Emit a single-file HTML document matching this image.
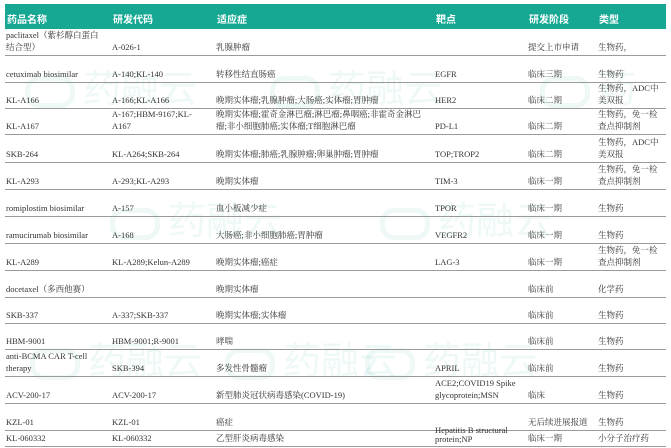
<!DOCTYPE html><html><head><meta charset="utf-8"><style>
body{margin:0;width:671px;height:448px;background:#fff;position:relative;overflow:hidden;font-family:"Liberation Serif","Noto Serif CJK SC",serif;color:#333;font-size:8.5px}
.hd{position:absolute;left:5px;top:4px;width:661px;height:25px;background:#17a894;color:#fff;font-family:"Liberation Sans","Noto Sans CJK SC",sans-serif;font-weight:bold;font-size:10px}
.hd span{position:absolute;top:7px}
.r{position:absolute;left:5px;width:661px;border-bottom:1.5px solid #9a9a9a}
.r div{position:absolute;bottom:2px;line-height:12px}
.c0{left:1px;width:98px}.c1{left:107px;width:96px}.c2{left:211px;width:206px}.c3{left:430px;width:92px}.c4{left:523px}.c5{left:593px;width:66px}
.wm{position:absolute;color:rgba(23,168,148,0.08);font-family:"Noto Sans CJK SC",sans-serif;font-size:38px;white-space:nowrap}
.wm i{display:inline-block;width:40px;height:22px;border:5px solid rgba(23,168,148,0.08);border-radius:14px;margin-right:8px;vertical-align:middle}
</style></head><body>
<div class="hd"><span style="left:2px">药品名称</span><span style="left:108px">研发代码</span><span style="left:212px">适应症</span><span style="left:431px">靶点</span><span style="left:524px">研发阶段</span><span style="left:594px">类型</span></div>
<div class="wm" style="left:25px;top:58px"><i></i>药融云</div>
<div class="wm" style="left:270px;top:58px"><i></i>药融云</div>
<div class="wm" style="left:540px;top:58px"><i></i>药</div>
<div class="wm" style="left:110px;top:190px"><i></i>药融云</div>
<div class="wm" style="left:380px;top:190px"><i></i>药融云</div>
<div class="wm" style="left:30px;top:330px"><i></i>药融云</div>
<div class="wm" style="left:225px;top:330px"><i></i>药融云</div>
<div class="wm" style="left:365px;top:330px"><i></i>药融云</div>
<div class="r" style="top:29px;height:26px"><div class="c0">paclitaxel（紫杉醇白蛋白结合型）</div><div class="c1">A-026-1</div><div class="c2">乳腺肿瘤</div><div class="c4">提交上市申请</div><div class="c5">生物药，</div></div>
<div class="r" style="top:56px;height:26px"><div class="c0">cetuximab biosimilar</div><div class="c1">A-140;KL-140</div><div class="c2">转移性结直肠癌</div><div class="c3">EGFR</div><div class="c4">临床三期</div><div class="c5">生物药</div></div>
<div class="r" style="top:83px;height:25px"><div class="c0">KL-A166</div><div class="c1">A-166;KL-A166</div><div class="c2">晚期实体瘤;乳腺肿瘤;大肠癌;实体瘤;胃肿瘤</div><div class="c3">HER2</div><div class="c4">临床二期</div><div class="c5">生物药，ADC中<br>美双报</div></div>
<div class="r" style="top:109px;height:25px"><div class="c0">KL-A167</div><div class="c1">A-167;HBM-9167;KL-A167</div><div class="c2">晚期实体瘤;霍奇金淋巴瘤;淋巴瘤;鼻咽癌;非霍奇金淋巴瘤;非小细胞肺癌;实体瘤;T细胞淋巴瘤</div><div class="c3">PD-L1</div><div class="c4">临床二期</div><div class="c5">生物药，免一检<br>查点抑制剂</div></div>
<div class="r" style="top:135px;height:27px"><div class="c0">SKB-264</div><div class="c1">KL-A264;SKB-264</div><div class="c2">晚期实体瘤;肺癌;乳腺肿瘤;卵巢肿瘤;胃肿瘤</div><div class="c3">TOP;TROP2</div><div class="c4">临床二期</div><div class="c5">生物药，ADC中<br>美双报</div></div>
<div class="r" style="top:163px;height:26px"><div class="c0">KL-A293</div><div class="c1">A-293;KL-A293</div><div class="c2">晚期实体瘤</div><div class="c3">TIM-3</div><div class="c4">临床一期</div><div class="c5">生物药，免一检<br>查点抑制剂</div></div>
<div class="r" style="top:190px;height:26px"><div class="c0">romiplostim biosimilar</div><div class="c1">A-157</div><div class="c2">血小板减少症</div><div class="c3">TPOR</div><div class="c4">临床一期</div><div class="c5">生物药</div></div>
<div class="r" style="top:217px;height:26px"><div class="c0">ramucirumab biosimilar</div><div class="c1">A-168</div><div class="c2">大肠癌;非小细胞肺癌;胃肿瘤</div><div class="c3">VEGFR2</div><div class="c4">临床一期</div><div class="c5">生物药</div></div>
<div class="r" style="top:244px;height:26px"><div class="c0">KL-A289</div><div class="c1">KL-A289;Kelun-A289</div><div class="c2">晚期实体瘤;癌症</div><div class="c3">LAG-3</div><div class="c4">临床一期</div><div class="c5">生物药，免一检<br>查点抑制剂</div></div>
<div class="r" style="top:271px;height:26px"><div class="c0">docetaxel（多西他赛）</div><div class="c2">晚期实体瘤</div><div class="c4">临床前</div><div class="c5">化学药</div></div>
<div class="r" style="top:298px;height:25px"><div class="c0">SKB-337</div><div class="c1">A-337;SKB-337</div><div class="c2">晚期实体瘤;实体瘤</div><div class="c4">临床前</div><div class="c5">生物药</div></div>
<div class="r" style="top:324px;height:25px"><div class="c0">HBM-9001</div><div class="c1">HBM-9001;R-9001</div><div class="c2">哮喘</div><div class="c4">临床前</div><div class="c5">生物药</div></div>
<div class="r" style="top:350px;height:26px"><div class="c0">anti-BCMA CAR T-cell therapy</div><div class="c1">SKB-394</div><div class="c2">多发性骨髓瘤</div><div class="c3">APRIL</div><div class="c4">临床前</div><div class="c5">生物药</div></div>
<div class="r" style="top:377px;height:26px"><div class="c0">ACV-200-17</div><div class="c1">ACV-200-17</div><div class="c2">新型肺炎冠状病毒感染(COVID-19)</div><div class="c3">ACE2;COVID19 Spike glycoprotein;MSN</div><div class="c4">临床</div><div class="c5">生物药</div></div>
<div class="r" style="top:404px;height:26px"><div class="c0">KZL-01</div><div class="c1">KZL-01</div><div class="c2">癌症</div><div class="c4">无后续进展报道</div><div class="c5">生物药</div></div>
<div class="r" style="top:431px;height:15px"><div class="c0">KL-060332</div><div class="c1">KL-060332</div><div class="c2">乙型肝炎病毒感染</div><div class="c3" style="line-height:9px">Hepatitis B structural protein;NP</div><div class="c4">临床一期</div><div class="c5">小分子治疗药</div></div>
</body></html>
